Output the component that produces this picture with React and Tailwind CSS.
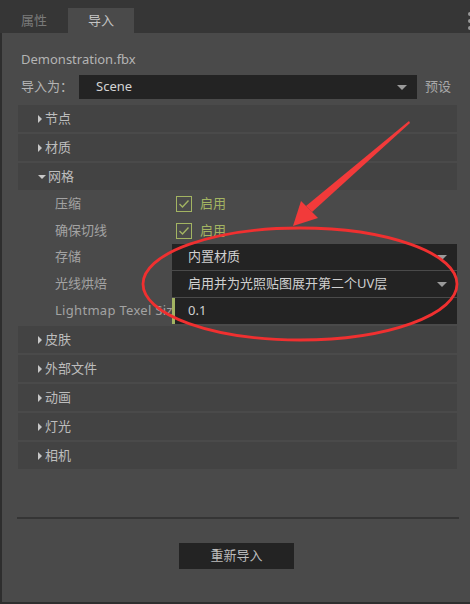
import { useState } from 'react';

const FONT = { fontFamily: '"Noto Sans", "Noto Sans CJK SC", sans-serif' };

function Caret({ open }) {
  return open ? (
    <span className="inline-block w-0 h-0 border-l-[4px] border-r-[4px] border-t-[4px] border-l-transparent border-r-transparent border-t-[#c8c8c8] mr-[2px]" />
  ) : (
    <span className="inline-block w-0 h-0 border-t-[4px] border-b-[4px] border-l-[4px] border-t-transparent border-b-transparent border-l-[#c8c8c8] mr-[3px]" />
  );
}

function SectionHeader({ title, open }) {
  return (
    <div className="h-[27px] bg-[#434343] flex items-center pl-[20px] text-[13px] text-[#bdbdbd]">
      <Caret open={open} />
      <span>{title}</span>
    </div>
  );
}

function DropArrow() {
  return (
    <span className="inline-block w-0 h-0 border-l-[5px] border-r-[5px] border-t-[5px] border-l-transparent border-r-transparent border-t-[#9a9a9a]" />
  );
}

function CheckRow({ label }) {
  return (
    <div className="h-[27px] flex items-center">
      <div className="w-[154px] pl-[37px] text-[13px] text-[#a3a3a3]">{label}</div>
      <div className="ml-[4px] w-[16px] h-[16px] border border-[#a3b462] flex items-center justify-center">
        <svg width="12" height="10" viewBox="0 0 12 10">
          <path d="M1.5 5 L4.5 8 L10.5 1.5" fill="none" stroke="#a3b462" strokeWidth="1.4" />
        </svg>
      </div>
      <span className="ml-[8px] text-[13px] text-[#a3b462]">启用</span>
    </div>
  );
}

function SelectRow({ label, value }) {
  return (
    <div className="h-[27px] flex items-start">
      <div className="w-[154px] h-[26px] flex items-center pl-[37px] text-[13px] text-[#a3a3a3] whitespace-nowrap">{label}</div>
      <div className="flex-1 h-[26px] bg-[#232323] flex items-center justify-between pl-[16px] pr-[10px] text-[13px] text-[#d0d0d0]">
        <span>{value}</span>
        <DropArrow />
      </div>
    </div>
  );
}

export default function App() {
  const [tab] = useState('import');
  const others = ['皮肤', '外部文件', '动画', '灯光', '相机'];

  return (
    <div className="w-[470px] h-[604px] bg-[#2e2e2e] relative overflow-hidden" style={FONT}>
      {/* tab bar */}
      <div className="h-[33px] bg-[#363636] flex items-end relative">
        <div className="w-[68px] h-[25px] flex items-center justify-center text-[13px] text-[#7a7a7a]">属性</div>
        <div className="w-[66px] h-[25px] bg-[#4a4a4a] flex items-center justify-center text-[13px] text-[#c4c4c4]">导入</div>
        <div className="absolute right-[-2px] top-[12px] flex flex-col gap-[3px]">
          <span className="w-[4px] h-[4px] rounded-full bg-[#9a9a9a]" />
          <span className="w-[4px] h-[4px] rounded-full bg-[#9a9a9a]" />
          <span className="w-[4px] h-[4px] rounded-full bg-[#9a9a9a]" />
        </div>
      </div>

      {/* panel */}
      <div className="h-[569px] ml-[2px] bg-[#4a4a4a] flex flex-col">
        <div className="h-[17px]" />
        <div className="pl-[19px] h-[20px] flex items-center text-[13px] text-[#b4b4b4]">Demonstration.fbx</div>
        <div className="h-[5px]" />
        <div className="h-[24px] flex items-center">
          <div className="pl-[19px] w-[77px] text-[13px] text-[#b4b4b4]">导入为：</div>
          <div className="w-[338px] h-[24px] bg-[#232323] flex items-center justify-between pl-[17px] pr-[10px] text-[13px] text-[#d4d4d4]">
            <span>Scene</span>
            <DropArrow />
          </div>
          <div className="ml-[8px] text-[13px] text-[#a8a8a8]">预设</div>
        </div>

        <div className="mt-[6px] ml-[16px] mr-[13px] flex flex-col">
          <SectionHeader title="节点" />
          <div className="h-[2px]" />
          <SectionHeader title="材质" />
          <div className="h-[2px]" />
          <SectionHeader title="网格" open />
          <div className="flex flex-col">
            <CheckRow label="压缩" />
            <CheckRow label="确保切线" />
            <SelectRow label="存储" value="内置材质" />
            <SelectRow label="光线烘焙" value="启用并为光照贴图展开第二个UV层" />
            <div className="h-[26px] flex items-start">
              <div className="w-[154px] h-[26px] flex items-center pl-[37px] text-[13px] text-[#a3a3a3] whitespace-nowrap tracking-[0.3px]">Lightmap Texel Siz</div>
              <div className="w-[3px] h-[26px] bg-[#a3b462]" />
              <div className="flex-1 h-[26px] bg-[#232323] flex items-center pl-[13px] text-[13px] text-[#d0d0d0]">0.1</div>
            </div>
          </div>
          {others.map((t) => (
            <div key={t}>
              <div className="h-[2px]" />
              <SectionHeader title={t} />
            </div>
          ))}
        </div>

        <div className="mt-[48px] ml-[15px] mr-[11px] h-[2px] bg-[#353535]" />
        <div className="mt-[24px] flex">
          <button className="ml-[177px] w-[115px] h-[26px] bg-[#232323] text-[13px] text-[#bdbdbd]">重新导入</button>
        </div>
      </div>

      {/* red annotation */}
      <svg className="absolute left-0 top-0 pointer-events-none" width="470" height="604">
        <ellipse cx="300" cy="284" rx="157" ry="56" fill="none" stroke="#f03030" strokeWidth="2.8" />
        <polygon points="409,121 410,123 312,212 306,206" fill="#f23a3a" />
        <polygon points="293,226 301,201 318,218" fill="#f23a3a" />
      </svg>
    </div>
  );
}
